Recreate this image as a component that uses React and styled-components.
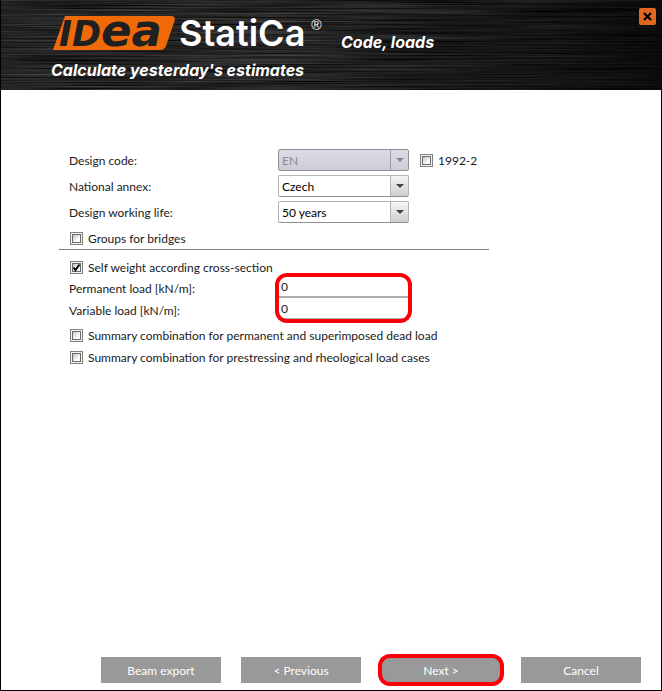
import React, { useState } from 'react';
import styled, { createGlobalStyle } from 'styled-components';

const GlobalStyle = createGlobalStyle`
  * {
    box-sizing: border-box;
  }
  body {
    margin: 0;
    background: white;
    font-family: Lato, 'Open Sans', sans-serif;
    font-size: 12px;
    color: #1a1a1a;
  }
  button, input, select {
    font: inherit;
  }
`;

const Window = styled.div`
  display: flex;
  flex-direction: column;
  min-height: 100vh;
  border: 1px solid black;
  border-top: none;
`;

const Header = styled.header`
  position: relative;
  display: flex;
  justify-content: space-between;
  align-items: flex-start;
  min-height: 90px;
  padding: 8px 5px 8px 50px;
  color: white;
  background: #262626;
`;

const Brushed = styled.svg`
  position: absolute;
  inset: 0;
  width: 100%;
  height: 100%;
`;

const Shade = styled.div`
  position: absolute;
  inset: 0;
  background: linear-gradient(100deg, rgba(0, 0, 0, 0) 45%, rgba(0, 0, 0, 0.7) 100%);
`;

const Brand = styled.div`
  position: relative;
  display: flex;
  flex-direction: column;
  gap: 8px;
`;

const BrandRow = styled.div`
  display: flex;
  align-items: flex-end;
  gap: 16px;
`;

const Logo = styled.svg`
  display: block;
  width: 274px;
  height: 44px;
  overflow: visible;
`;

const Subtitle = styled.h1`
  margin: 0;
  font-family: Inter, 'Liberation Sans', sans-serif;
  font-size: 16px;
  line-height: 20px;
  font-weight: bold;
  font-style: italic;
`;

const Tagline = styled(Subtitle).attrs({ as: 'p' })``;

const CloseButton = styled.button`
  position: relative;
  display: flex;
  align-items: center;
  justify-content: center;
  width: 17px;
  height: 17px;
  padding: 0;
  border: none;
  border-radius: 2px;
  background: #e1661f;
`;

const Main = styled.main`
  flex: 1;
  padding: 57px 50px 20px 58px;
`;

const Section = styled.section`
  max-width: 430px;
  padding-left: 10px;
`;

const CodeSection = styled(Section)`
  border-bottom: 1px solid #828282;
  margin-bottom: 6px;
`;

const Row = styled.div`
  display: grid;
  grid-template-columns: 209px 131px 1fr;
  align-items: center;
  height: 26px;
`;

const CheckRow = styled.div`
  padding-top: 2px;
`;

const SelectBox = styled.div`
  position: relative;
`;

const Select = styled.select`
  display: block;
  appearance: none;
  width: 100%;
  height: 22px;
  padding: 0 24px 0 3px;
  border: 1px solid #b4b4b8;
  border-bottom-color: #8f8f93;
  border-radius: 2px;
  background: linear-gradient(#f6f6f6, #cfcfcf) right / 17px 100% no-repeat,
    linear-gradient(#b4b4b8, #b4b4b8) right / 18px 100% no-repeat, white;
  color: black;
  &:disabled {
    border-color: #8f8f95;
    background: linear-gradient(#dcdce4, #cdcdd7) right / 17px 100% no-repeat,
      linear-gradient(#9d9da3, #9d9da3) right / 18px 100% no-repeat,
      linear-gradient(#dcdce4, #cdcdd7);
    color: #8c8c90;
    opacity: 1;
  }
`;

const Arrow = styled.svg`
  position: absolute;
  right: 5px;
  top: 9px;
  pointer-events: none;
`;

const CheckLabel = styled.label`
  display: flex;
  align-items: center;
  gap: 5px;
  height: 22px;
  margin-left: ${(props) => (props.$aside ? '11px' : '1px')};
`;

const CheckBox = styled.span`
  display: grid;
  flex: none;
  width: 13px;
  height: 13px;
  > * {
    grid-area: 1 / 1;
  }
  svg {
    pointer-events: none;
  }
`;

const CheckInput = styled.input`
  appearance: none;
  width: 13px;
  height: 13px;
  margin: 0;
  padding: 2px;
  border: 1px solid #808080;
  background: linear-gradient(135deg, #c4c4c4, #fdfdfd 70%) content-box, #f4f4f4;
`;

const Loads = styled.div`
  display: grid;
  grid-template-columns: 209px 131px;
  margin-bottom: 2px;
`;

const LoadLabels = styled.div`
  display: flex;
  flex-direction: column;
  line-height: 22px;
`;

const LoadInputs = styled.div`
  position: relative;
  margin: -2px 0 2px;
`;

const LoadInput = styled.input`
  display: block;
  width: 100%;
  height: 22px;
  padding: 0 3px;
  border: 1px solid #abadb3;
  border-width: 0 0 2px;
  outline: none;
  background: white;
  color: #1a1a1a;
`;

const Marker = styled.span`
  position: absolute;
  inset: -3px;
  border: 4px solid #fb0007;
  border-radius: 12px;
  pointer-events: none;
`;

const Footer = styled.footer`
  display: flex;
  justify-content: flex-end;
  gap: 20px;
  padding: 0 20px 7px;
`;

const Button = styled.button`
  position: relative;
  width: 120px;
  height: 26px;
  padding: 0;
  border: none;
  background: #999;
  color: white;
`;

const CheckItem = ({ label, value, onChange, aside }) => (
  <CheckLabel $aside={aside}>
    <CheckBox>
      <CheckInput type="checkbox" checked={value} onChange={(e) => onChange(e.target.checked)} />
      <svg width="13" height="13" viewBox="0 0 13 13">
        <rect x="2.5" y="2.5" width="8" height="8" fill="none" stroke="#6a6a6a" />
        {value && <path d="M3.5 6.5 5.5 9 9.5 3.5" fill="none" stroke="black" strokeWidth="2" />}
      </svg>
    </CheckBox>
    {label}
  </CheckLabel>
);

const DropDown = ({ id, options, disabled }) => (
  <SelectBox>
    <Select id={id} disabled={disabled}>
      {options.map((o) => <option key={o}>{o}</option>)}
    </Select>
    <Arrow width="8" height="4" viewBox="0 0 8 4">
      <path d="M0 0h8L4 4z" fill={disabled ? '#85858a' : '#444'} />
    </Arrow>
  </SelectBox>
);

const App = () => {
  const [checks, setChecks] = useState({
    bridge: false,
    groups: false,
    selfWeight: true,
    permanent: false,
    prestressing: false,
  });
  const [loads, setLoads] = useState({ permanent: '0', variable: '0' });

  const check = (name) => ({
    value: checks[name],
    onChange: (value) => setChecks({ ...checks, [name]: value }),
  });
  const load = (name) => ({
    id: name,
    value: loads[name],
    onChange: (e) => setLoads({ ...loads, [name]: e.target.value }),
  });

  return (
    <>
      <GlobalStyle />
      <Window>
        <Header>
          <Brushed aria-hidden="true">
            <filter id="brushed" x="0" y="0" width="100%" height="100%" colorInterpolationFilters="sRGB">
              <feTurbulence type="fractalNoise" baseFrequency="0.006 0.7" numOctaves="3" seed="4" />
              <feColorMatrix values="0.36 0 0 0 -0.04  0.36 0 0 0 -0.04  0.36 0 0 0 -0.04  0 0 0 0 1" />
            </filter>
            <rect width="100%" height="100%" filter="url(#brushed)" />
          </Brushed>
          <Shade />
          <Brand>
            <BrandRow>
              <Logo viewBox="0 0 274 44">
                <path d="M14 8H120Q125 8 123.500 13L115 38Q113.500 42 109 42H2z" fill="#f06a0a" />
                <g fontFamily="DejaVu Sans" fontWeight="bold" fontStyle="italic" fill="#202020">
                  <text x="8" y="38" fontSize="35">ID</text>
                  <text x="50" y="38" fontSize="45">ea</text>
                </g>
                <g fill="white">
                  <text x="128" y="38" fontFamily="Inter" fontSize="36" fontWeight="600">StatiCa</text>
                  <text x="260" y="22" fontFamily="Liberation Sans" fontSize="14" fontStyle="italic">®</text>
                </g>
              </Logo>
              <Subtitle>Code, loads</Subtitle>
            </BrandRow>
            <Tagline>Calculate yesterday's estimates</Tagline>
          </Brand>
          <CloseButton aria-label="Close">
            <svg width="9" height="9" viewBox="0 0 9 9">
              <path d="M1 1 8 8M8 1 1 8" stroke="black" strokeWidth="2.200" />
            </svg>
          </CloseButton>
        </Header>
        <Main>
          <CodeSection>
            <Row>
              <label htmlFor="code">Design code:</label>
              <DropDown id="code" options={['EN']} disabled />
              <CheckItem label="1992-2" aside {...check('bridge')} />
            </Row>
            <Row>
              <label htmlFor="annex">National annex:</label>
              <DropDown id="annex" options={['Czech']} />
            </Row>
            <Row>
              <label htmlFor="life">Design working life:</label>
              <DropDown id="life" options={['50 years']} />
            </Row>
            <CheckRow>
              <CheckItem label="Groups for bridges" {...check('groups')} />
            </CheckRow>
          </CodeSection>
          <Section>
            <CheckItem label="Self weight according cross-section" {...check('selfWeight')} />
            <Loads>
              <LoadLabels>
                <label htmlFor="permanent">Permanent load [kN/m]:</label>
                <label htmlFor="variable">Variable load [kN/m]:</label>
              </LoadLabels>
              <LoadInputs>
                <LoadInput {...load('permanent')} />
                <LoadInput {...load('variable')} />
                <Marker />
              </LoadInputs>
            </Loads>
            <CheckItem label="Summary combination for permanent and superimposed dead load" {...check('permanent')} />
            <CheckItem label="Summary combination for prestressing and rheological load cases" {...check('prestressing')} />
          </Section>
        </Main>
        <Footer>
          <Button>Beam export</Button>
          <Button>&lt; Previous</Button>
          <Button>
            Next &gt;
            <Marker />
          </Button>
          <Button>Cancel</Button>
        </Footer>
      </Window>
    </>
  );
};

export default App;
